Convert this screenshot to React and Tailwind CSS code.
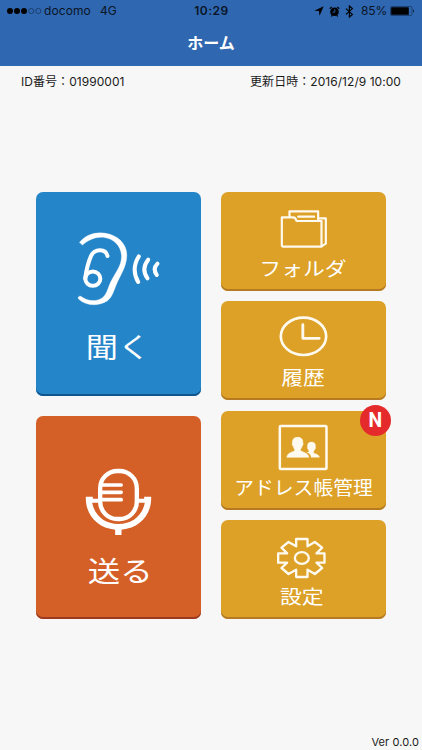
import React from 'react';
import clsx from 'clsx';

const StatusBar = () => (
    <div className="flex h-[22px] items-center pl-[7px] pr-[7px] text-[12px] text-[#0b1526]">
        <div className="flex flex-1 items-center">
            <svg width="35" height="8" viewBox="0 0 35 8">
                <circle cx="3" cy="4" r="3" fill="#000" />
                <circle cx="10" cy="4" r="3" fill="#000" />
                <circle cx="17" cy="4" r="3" fill="#000" />
                <circle cx="24.2" cy="4" r="2.6" fill="none" stroke="#12305c" strokeWidth="0.7" />
                <circle cx="31.3" cy="4" r="2.6" fill="none" stroke="#12305c" strokeWidth="0.7" />
            </svg>
            <span className="ml-[2px] tracking-[0.1px]">docomo</span>
            <span className="ml-[9px]">4G</span>
        </div>
        <span className="pl-[1px] text-[12px] font-semibold tracking-[0.5px]">10:29</span>
        <div className="flex flex-1 items-center justify-end">
            <svg width="10" height="10" viewBox="0 0 9 9">
                <path d="M8.7 0.3 L5 8.7 L4.4 4.6 L0.3 4.2 Z" fill="#000" />
            </svg>
            <svg className="ml-[5px]" width="11" height="11" viewBox="0 0 11 11">
                <circle cx="5.5" cy="5.8" r="4.3" fill="#000" />
                <path d="M0.8 2.8 L2.8 0.9 M10.2 2.8 L8.2 0.9 M2.4 10.5 L3.2 9 M8.6 10.5 L7.8 9" stroke="#000" strokeWidth="1.3" />
                <path d="M5.8 3.2 V6.2 H3.5" stroke="#2f67b0" strokeWidth="0.9" fill="none" />
            </svg>
            <svg className="ml-[5px]" width="9" height="13" viewBox="0 0 9 13">
                <path d="M1 3.6 L7.4 9.4 L4.4 12 V1 L7.4 3.6 L1 9.4" fill="none" stroke="#000" strokeWidth="1.2" />
            </svg>
            <span className="ml-[7px] tracking-[-0.2px]">85%</span>
            <svg className="ml-[3px]" width="25" height="10" viewBox="0 0 25 10">
                <rect x="0.5" y="0.5" width="21.5" height="9" rx="1.5" fill="none" stroke="#12305c" strokeWidth="0.7" />
                <rect x="1.2" y="1.2" width="17.6" height="7.6" rx="0.6" fill="#000" />
                <path d="M23.2 3.2 Q25 5 23.2 6.8 Z" fill="#000" />
            </svg>
        </div>
    </div>
);

const EarIcon = () => (
    <svg className="mt-[39px]" width="84" height="76" viewBox="139.5 138 252 228" fill="none" stroke="#fff" strokeLinecap="round">
        <path
            d="M147 172 C168 146 200 140 226 145 C262 151 290 177 289 212 C288 247 268 272 257 300 C248 322 245 336 231 347 C205 365 166 363 144 342 C141 337 145 332 151 334 C170 349 198 351 216 338 C229 328 231 312 240 292 C254 262 274 243 273 212 C271 181 248 160 218 157 C194 155 174 165 156 180 Z"
            fill="#fff"
            strokeWidth="1"
            strokeLinejoin="round"
        />
        <path d="M231 213 C225 189 192 192 182 212 C174 230 168 252 164 280" strokeWidth="12" />
        <ellipse cx="187" cy="281" rx="22.5" ry="21.5" strokeWidth="12" />
        <path d="M325 214 Q301 252 323 291" strokeWidth="12" />
        <path d="M353 224 Q331 252 351 280" strokeWidth="12" />
        <path d="M381 236 Q365 252 379 270" strokeWidth="12" />
    </svg>
);

const MicIcon = () => (
    <svg className="mt-[50px]" width="84" height="70" viewBox="139.5 168 252 210" fill="none" stroke="#fff">
        <rect x="209" y="183" width="110" height="144" rx="52" strokeWidth="13" />
        <path d="M212 225 H272 M212 247 H272 M212 269 H272" strokeWidth="11" strokeLinecap="round" />
        <path d="M166 260 H187 V266 H204 V278 H185 C192 316 222 342 264 342 C306 342 336 316 343 278 H324 V266 H341 V260 H362 C364 314 328 354 273 359 V375 H254 V359 C200 354 164 314 166 260 Z" fill="#fff" stroke="none" />
    </svg>
);

const FolderIcon = () => (
    <svg className="mt-[17px]" width="50" height="39" viewBox="190.5 72 150 117" fill="none" stroke="#fffaf0" strokeWidth="6.5" strokeLinejoin="round">
        <path d="M199 97 H233 Q240 97 243 108 H318 V185 H202 Q199 185 199 181 Z" />
        <path d="M222 96 V79 H308 V107" />
        <path d="M248 95 H296" strokeLinecap="round" />
        <path d="M309 100 H331 V176 L318 184" />
    </svg>
);

const ClockIcon = () => (
    <svg className="mt-[15px]" width="50" height="41" viewBox="190.5 65 150 123" fill="none" stroke="#fffaf0">
        <ellipse cx="264" cy="126" rx="68" ry="56" strokeWidth="8" />
        <path d="M262 91 V132 H311" strokeWidth="8.5" strokeLinecap="round" strokeLinejoin="round" />
    </svg>
);

const AddressIcon = () => (
    <svg className="mt-[13px]" width="52" height="47" viewBox="187.5 70 156 141">
        <rect x="193" y="76" width="140" height="129" rx="3" fill="none" stroke="#fffaf0" strokeWidth="7.5" />
        <path
            d="M246 110 C257 110 263 116 262 126 C264 130 262 134 260 136 C259 142 254 145 255 150 C264 155 278 157 280 170 H214 C215 157 229 155 238 150 C238 145 234 142 233 136 C230 134 229 130 231 126 C230 116 236 110 246 110 Z"
            fill="#fffaf0"
            stroke="#fffaf0"
            strokeWidth="1.5"
        />
        <path
            d="M288 124 C297 124 301 130 300 138 C301 142 300 145 297 147 C296 151 293 153 294 157 C301 160 311 162 312 170 H287 C286 161 281 158 275 155 C281 154 281 151 279 147 C276 145 275 142 276 138 C275 130 279 124 288 124 Z"
            fill="#fffaf0"
            stroke="#fffaf0"
            strokeWidth="1"
        />
    </svg>
);

const GearIcon = () => (
    <svg className="mt-[17px]" width="52" height="42" viewBox="187.5 75 156 126" overflow="visible" fill="none" stroke="#fffaf0" strokeLinejoin="round">
        <path
            d="M242 81 H276 V103 L298 90 L320 107 L303 124 H327 V152 H303 L320 168 L298 186 L276 173 V195 H242 V173 L219 186 L198 168 L215 152 H188 V124 H215 L198 107 L219 90 L242 103 Z"
            strokeWidth="7"
        />
        <ellipse cx="259" cy="138" rx="21" ry="17.5" strokeWidth="7" />
    </svg>
);

const MenuButton = ({ icon, label, color, large, labelClass, badge }) => (
    <button className={clsx('relative flex w-full flex-1 flex-col items-center rounded-[7px] text-white', color)}>
        <div className={large ? 'h-[140px]' : 'h-[66px]'}>{icon}</div>
        <span
            className={clsx(
                'whitespace-nowrap',
                large ? 'text-[28px] leading-[32px]' : 'text-[19px] leading-[24px]',
                labelClass
            )}
        >
            {label}
        </span>
        {badge && (
            <span className="absolute -right-[5px] -top-[6px] flex h-[31px] w-[31px] items-center justify-center rounded-full bg-[#e52a2b] font-[Roboto,sans-serif] text-[21px] font-bold leading-none">
                <span className="scale-x-[0.92]">{badge}</span>
            </span>
        )}
    </button>
);

const yellow = 'bg-[#dca126] shadow-[inset_0_-2px_0_#b57a22]';

const App = () => (
    <div className="flex h-[750px] w-[422px] flex-col overflow-hidden bg-[#f7f7f7] font-[Inter,'Noto_Sans_CJK_JP',sans-serif] text-[#1a1a1a]">
        <header className="h-[66px] bg-[#2f67b0]">
            <StatusBar />
            <h1 className="text-center text-[16px] font-bold leading-[43px] text-white">ホーム</h1>
        </header>
        <div className="flex h-[30px] justify-between pl-[21px] pr-[21px] text-[12px] leading-[31px] tracking-[0.05px]">
            <span>ID番号：01990001</span>
            <span>更新日時：2016/12/9 10:00</span>
        </div>
        <main className="mt-[96px] flex h-[427px] gap-[20px] pl-[36px] pr-[36px]">
            <div className="flex w-[165px] flex-col gap-[20px]">
                <MenuButton large icon={<EarIcon />} label="聞く" labelClass="scale-x-[1.15] pr-[1px]" color="bg-[#2585c9] shadow-[inset_0_-2px_0_#11558f]" />
                <MenuButton large icon={<MicIcon />} label="送る" labelClass="scale-x-[1.16] pl-[3px]" color="bg-[#d56027] shadow-[inset_0_-2px_0_#9c3a20]" />
            </div>
            <div className="flex w-[165px] flex-col gap-[10.5px]">
                <MenuButton icon={<FolderIcon />} label="フォルダ" labelClass="scale-x-[1.15] pr-[1px]" color={yellow} />
                <MenuButton icon={<ClockIcon />} label="履歴" labelClass="scale-x-[1.15]" color={yellow} />
                <MenuButton icon={<AddressIcon />} label="アドレス帳管理" labelClass="scale-x-[1.04]" color={yellow} badge="N" />
                <MenuButton icon={<GearIcon />} label="設定" labelClass="scale-x-[1.15] pr-[2px]" color={yellow} />
            </div>
        </main>
        <footer className="mt-auto pr-[3px] text-right text-[11px] leading-[15px] tracking-[0.1px]">Ver 0.0.0</footer>
    </div>
);

export default App;
